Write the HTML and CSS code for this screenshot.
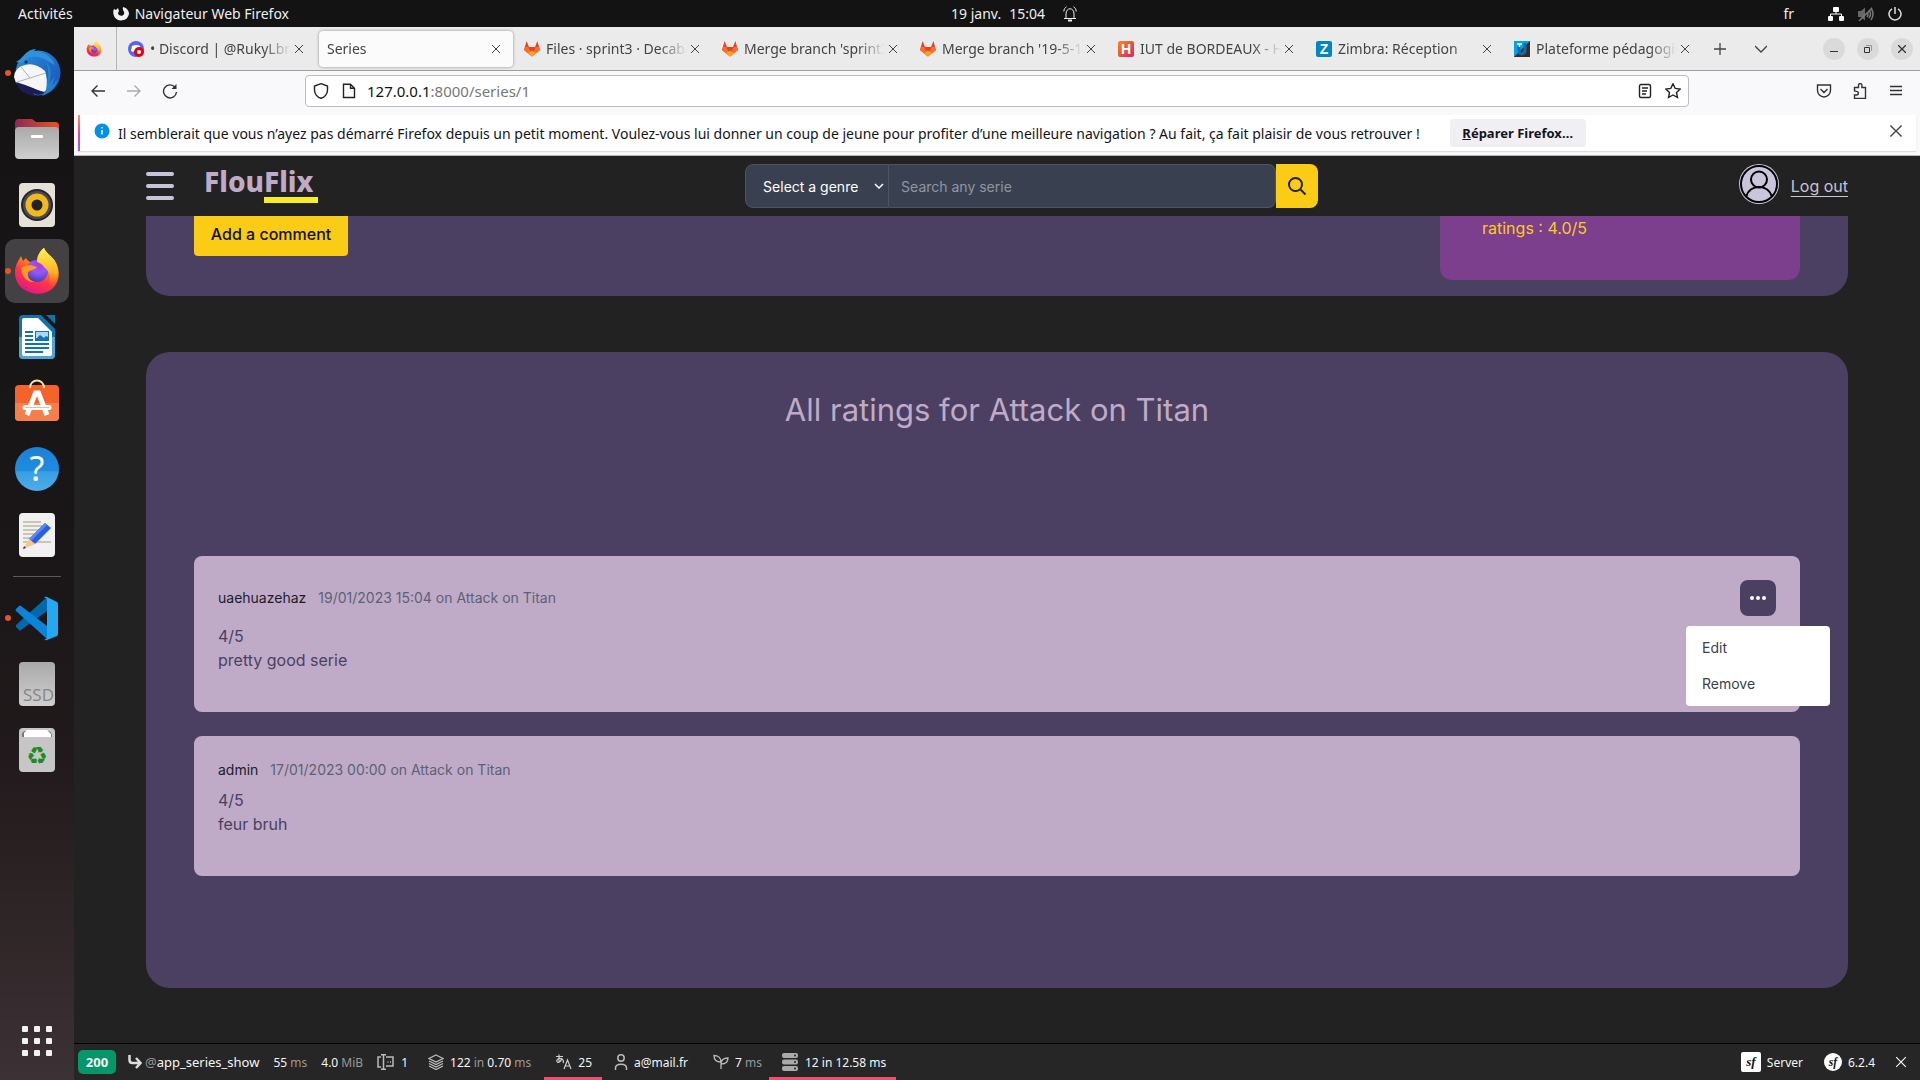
FILE: index.html
```html
<!DOCTYPE html>
<html lang="fr">
<head>
<meta charset="utf-8">
<meta name="viewport" content="width=device-width, initial-scale=1">
<title>Series</title>
<link rel="stylesheet" href="styles.css">
</head>
<body>
<svg class="defs" aria-hidden="true">
  <defs>
    <linearGradient id="fox" x1="0.8" y1="0" x2="0.3" y2="1"><stop offset="0" stop-color="#fff44f"/><stop offset=".35" stop-color="#ff980e"/><stop offset=".65" stop-color="#ff3647"/><stop offset="1" stop-color="#e31587"/></linearGradient>
    <linearGradient id="foxtail" x1="0.5" y1="0" x2="0.5" y2="1"><stop offset="0" stop-color="#fff44f"/><stop offset=".6" stop-color="#ffb02a"/><stop offset="1" stop-color="#ff5a34" stop-opacity="0"/></linearGradient>
    <radialGradient id="globe" cx=".6" cy=".2" r=".8"><stop offset="0" stop-color="#b833e1"/><stop offset=".5" stop-color="#9059ff"/><stop offset="1" stop-color="#4a3fae"/></radialGradient>
    <linearGradient id="bird" x1="0" y1="0" x2="1" y2="1"><stop offset="0" stop-color="#2f8fe0"/><stop offset=".5" stop-color="#1f6fc9"/><stop offset="1" stop-color="#1d4fb4"/></linearGradient>
    <linearGradient id="grey" x1="0" y1="0" x2="0" y2="1"><stop offset="0" stop-color="#a9a9a9"/><stop offset="1" stop-color="#cfcfcf"/></linearGradient>
    <linearGradient id="folder" x1="0" y1="0" x2="1" y2="0"><stop offset="0" stop-color="#8b2a52"/><stop offset="1" stop-color="#e95420"/></linearGradient>
    <linearGradient id="blue" x1="0" y1="0" x2="0" y2="1"><stop offset="0" stop-color="#1b7fd6"/><stop offset=".55" stop-color="#1f8de0"/><stop offset=".56" stop-color="#389fe3"/><stop offset="1" stop-color="#4caee8"/></linearGradient>
    <linearGradient id="hfav" x1="0" y1="0" x2="1" y2="1"><stop offset="0" stop-color="#f58a1f"/><stop offset="1" stop-color="#d6246e"/></linearGradient>
    <symbol id="firefox" viewBox="0 0 46 48">
      <path d="M1 25C1 19 4 14 7 9l2 5c1-1 2-2 3-3 1 2 3 4 5 4l7-1C23 8 27 3 30 1c2 6 9 8 12 15 5 10 3 20-4 26-8 7-22 6-30-1C3 37 1 31 1 25z" fill="url(#fox)"/>
      <circle cx="23" cy="24" r="11" fill="url(#globe)"/>
      <path d="M7 21c4-3 9-4 16-1-2 4-8 2-9 6-1 4 2 8 7 9-8 1-14-6-14-14z" fill="#ff9a1e"/>
      <path d="M30 1c2 6 9 8 12 15 4 9 1 20-8 25 3-6 3-16-4-21-2-4-7-4-7-6 0-6 4-11 7-13z" fill="url(#foxtail)"/>
    </symbol>
    <symbol id="gitlab" viewBox="0 0 16 16">
      <path d="M2.600 0 5 6h6l2.400-6L16 9 8 15.500 0 9z" fill="#e24329"/>
      <path d="M0 9 1 6h3.500L8 15.500zM16 9l-1-3h-3.500L8 15.500z" fill="#fc6d26"/>
      <path d="M4 12 8 9.500l4 2.500-4 3.500z" fill="#fca326"/>
    </symbol>
    <symbol id="close" viewBox="0 0 10 10"><path d="m1 1 8 8M9 1 1 9" fill="none" stroke="currentColor"/></symbol>
  </defs>
</svg>

<header class="topbar">
  <div class="topbar-left">
    <span>Activités</span>
    <span class="app-name">
      <svg width="16" height="16" viewBox="0 0 16 16"><path d="M1 3l2 1 2-2 1 3-1 2c0 3 5 4 6 1 1-3-2-3-1-7 4 1 6 4 6 7a8 8 0 0 1-15 2C0 7 0 5 1 3z" fill="#f2f2f2"/></svg>
      Navigateur Web Firefox
    </span>
  </div>
  <div class="clock">
    <span>19 janv.</span><span>15:04</span>
    <svg width="14" height="16" viewBox="0 0 14 16" fill="none" stroke="#eee"><path d="M1 12.500h12M3 12.500V8c0-7 8-7 8 0v4.500M.8 5.500C1 3 2 1.500 3.500.8M13.200 5.500c-.2-2.500-1.200-4-2.700-4.700"/><path d="M5 14.500h4" stroke-width="2"/></svg>
  </div>
  <div class="topbar-right">
    <span class="lang">fr</span>
    <svg width="16" height="14" viewBox="0 0 16 14" fill="#fff"><rect x="5" width="6" height="5" rx="1"/><rect y="9" width="5" height="5" rx="1"/><rect x="11" y="9" width="5" height="5" rx="1"/><path d="M2.500 9V7h11v2M8 4v3" fill="none" stroke="#fff"/></svg>
    <svg width="16" height="14" viewBox="0 0 16 14" fill="#666"><path d="M0 4h3l4-3.500v13L3 10H0z"/><path d="M9 5q2 2 0 5M11 3q3 4 0 8M13 1q4 6 0 12M1 14 14 1" fill="none" stroke="#777" stroke-width="1.500"/></svg>
    <svg width="14" height="14" viewBox="0 0 14 14" fill="none" stroke="#ddd" stroke-width="1.500"><path d="M4 1.800a6 6 0 1 0 6 0M7 0v7"/></svg>
  </div>
</header>

<div class="desktop">
  <nav class="dock" aria-label="Dock">
    <button class="running" aria-label="Thunderbird"><svg width="48" height="48" viewBox="0 0 48 48">
      <circle cx="25" cy="24" r="22.500" fill="url(#bird)"/>
      <path d="M3 13 9 9C12 4 17 0 23 0l-2 2c10 0 18 6 21 14l-11-6c-7-4-17-3-22 4z" fill="#2f92dc"/>
      <path d="M33 12c5 6 6 15 3 23l6-8-3 10 6-7c-2 8-8 14-16 17l5-7-6 4c8-9 9-21 5-32z" fill="#2383d0"/>
      <path d="M1 28Q2 18 12 16q10-3 20 6 3 8 1 19L31 43 3 34z" fill="#f6f6f8"/>
      <path d="m8 18 9 11 16-5M17 29 4 33" fill="none" stroke="#aeb2bc"/>
      <path d="M3 33q10 3 17 6 8 4 12 4-6 5-12 1l2 3C12 46 5 41 3 33z" fill="#1c1b54"/>
      <circle cx="13" cy="13" r="1.500" fill="#123"/></svg></button>
    <button aria-label="Fichiers"><svg width="48" height="48" viewBox="0 0 48 48"><path d="M2 8q0-4 4-4h13l4 3h19q4 0 4 4v12H2z" fill="url(#folder)"/><rect x="2" y="12" width="44" height="32" rx="4" fill="url(#grey)"/><rect x="18" y="20" width="12" height="3" rx="1" fill="#fff"/></svg></button>
    <button aria-label="Rhythmbox"><svg width="48" height="48" viewBox="0 0 48 48"><rect x="6" y="2" width="36" height="44" rx="4" fill="#e6e1d7"/><circle cx="24" cy="24" r="16" fill="#26262c"/><circle cx="24" cy="24" r="14" fill="#4a4a52"/><circle cx="24" cy="24" r="11.500" fill="#f0b91d"/><circle cx="24" cy="24" r="5.500" fill="#222"/></svg></button>
    <button class="running active" aria-label="Firefox"><svg width="46" height="48"><use href="#firefox"/></svg></button>
    <button aria-label="LibreOffice Writer"><svg width="48" height="48" viewBox="0 0 48 48"><path d="M10 2h18l14 14v26q0 4-4 4H10q-4 0-4-4V6q0-4 4-4z" fill="#1174a8"/><path d="M6 24h36v18q0 4-4 4H10q-4 0-4-4z" fill="#4aa7d6"/><path d="M11 5h14l14 14v22q0 2-2 2H11q-2 0-2-2V7q0-2 2-2z" fill="#fff"/><path d="M33 2h9v9z" fill="#1174a8"/><path d="M12 19h8M12 23h8M12 27h8M12 31h24M12 35h24M12 39h18" stroke="#1073b5" stroke-width="2"/><path d="M22 18h14v10H22z" fill="#1073b5"/><path d="M23 19h12v5l-2-1-2 2-4-3-3 3h-1z" fill="#a8d8f5"/></svg></button>
    <button aria-label="Logiciels"><svg width="48" height="48" viewBox="0 0 48 48"><rect x="2" y="6" width="44" height="36" rx="4" fill="#f4632a"/><path d="M2 24h44v14q0 4-4 4H6q-4 0-4-4z" fill="#f57f4a"/><path d="M17 9c0-10 14-10 14 0" fill="none" stroke="#fbe3a8" stroke-width="2"/><path d="m14 36 8.500-22h3L34 36" fill="none" stroke="#fff" stroke-width="5"/><path d="M12 28.500h24" stroke="#fff" stroke-width="5" stroke-linecap="round"/><path d="M12 28.500h24" stroke="#f3b59b"/></svg></button>
    <button aria-label="Aide"><svg width="48" height="48" viewBox="0 0 48 48"><circle cx="24" cy="24" r="22" fill="url(#blue)"/><text class="help-mark" x="24" y="36" text-anchor="middle">?</text></svg></button>
    <button aria-label="Éditeur de texte"><svg width="48" height="48" viewBox="0 0 48 48"><rect x="6" y="2" width="36" height="44" rx="4" fill="#f1f1f1"/><path d="M10 11h18M10 15h20M10 19h18M10 23h13M10 27h9M10 31h28" stroke="#c9c5b8" stroke-width="2"/><path d="m16 28 16-16 6 5-16 16z" fill="#2a5ee0"/><path d="m16 28 16-16 2 2-16 16z" fill="#5b86f5"/><path d="m16 28 6 5-12 5z" fill="#ffc48a"/><path d="m11 35 2 2-3 1z" fill="#333"/></svg></button>
    <hr>
    <button class="running" aria-label="Visual Studio Code"><svg width="48" height="48" viewBox="0 0 48 48"><path d="M3 31 34 3v14L8 36q-1 1-2 0l-3-3z" fill="#0069ad"/><path d="M3 17q-1-1 0-2l3-3q1-1 2 0l26 20v13z" fill="#0a84d8"/><path d="m34 3 10 5q1 1 1 2v30q0 1-1 2l-10 4q-1 1-3-1 3 1 3-2V6q0-3-3-2 1-2 3-1z" fill="#25a7f2"/></svg></button>
    <button aria-label="SSD"><svg width="48" height="48" viewBox="0 0 48 48"><rect x="6" y="2" width="36" height="44" rx="4" fill="url(#grey)"/><text class="disk-label" x="41" y="41" text-anchor="end">SSD</text></svg></button>
    <button aria-label="Corbeille"><svg width="48" height="48" viewBox="0 0 48 48"><rect x="6" y="2" width="36" height="44" rx="4" fill="#c6c6c6"/><path d="M9 11q-1-6 4-6h22q4 0 4 6z" fill="#777"/><path d="M11 11V7l3-3h20l4 4v3z" fill="#fff"/><text class="recycle" x="24" y="38" text-anchor="middle">♻</text></svg></button>
    <button class="all-apps" aria-label="Applications"><svg width="30" height="30" viewBox="0 0 30 30" fill="#f2f2f2"><rect width="6" height="6" rx="1"/><rect x="12" width="6" height="6" rx="1"/><rect x="24" width="6" height="6" rx="1"/><rect y="12" width="6" height="6" rx="1"/><rect x="12" y="12" width="6" height="6" rx="1"/><rect x="24" y="12" width="6" height="6" rx="1"/><rect y="24" width="6" height="6" rx="1"/><rect x="12" y="24" width="6" height="6" rx="1"/><rect x="24" y="24" width="6" height="6" rx="1"/></svg></button>
  </nav>

  <div class="browser">
    <div class="tabs">
      <button class="pinned" aria-label="Firefox"><svg width="16" height="16"><use href="#firefox"/></svg></button>
      <div class="tab"><svg class="favicon" viewBox="0 0 16 16"><circle cx="8" cy="8" r="8" fill="#5865f2"/><path d="M4 5q4-2 8 0l1 5-2 1-1-1H6l-1 1-2-1z" fill="#fff"/><circle cx="11" cy="11" r="5" fill="#e8000d"/><circle cx="11" cy="11" r="2" fill="#fff"/></svg><span class="tab-title">• Discord | @RukyLbrown</span><button aria-label="Fermer"><svg><use href="#close"/></svg></button></div>
      <div class="tab selected"><span class="tab-title">Series</span><button aria-label="Fermer"><svg><use href="#close"/></svg></button></div>
      <div class="tab"><svg class="favicon"><use href="#gitlab"/></svg><span class="tab-title">Files · sprint3 · Decabane</span><button aria-label="Fermer"><svg><use href="#close"/></svg></button></div>
      <div class="tab"><svg class="favicon"><use href="#gitlab"/></svg><span class="tab-title">Merge branch 'sprint3'</span><button aria-label="Fermer"><svg><use href="#close"/></svg></button></div>
      <div class="tab"><svg class="favicon"><use href="#gitlab"/></svg><span class="tab-title">Merge branch '19-5-1'</span><button aria-label="Fermer"><svg><use href="#close"/></svg></button></div>
      <div class="tab"><svg class="favicon" viewBox="0 0 16 16"><rect width="16" height="16" rx="2" fill="url(#hfav)"/><text class="fav-letter" x="8" y="13" text-anchor="middle">H</text></svg><span class="tab-title">IUT de BORDEAUX - HP</span><button aria-label="Fermer"><svg><use href="#close"/></svg></button></div>
      <div class="tab"><svg class="favicon" viewBox="0 0 16 16"><rect width="16" height="16" rx="2" fill="#0087c3"/><text class="fav-letter" x="8" y="13" text-anchor="middle">Z</text></svg><span class="tab-title">Zimbra: Réception</span><button aria-label="Fermer"><svg><use href="#close"/></svg></button></div>
      <div class="tab"><svg class="favicon" viewBox="0 0 16 16"><path d="M0 0h16v16H0z" fill="#3b2a26"/><path d="M0 0h16L0 16z" fill="#00a4e4"/><path d="M5 5v5c0 4 6 4 6-1V2" fill="none" stroke="#0a6fb0" stroke-width="3"/><path d="M3 3h5M5.500 3v3" stroke="#fff" stroke-width="1.500"/></svg><span class="tab-title">Plateforme pédagogique</span><button aria-label="Fermer"><svg><use href="#close"/></svg></button></div>
      <button class="tab-action" aria-label="Nouvel onglet"><svg width="12" height="12" viewBox="0 0 12 12"><path d="M6 0v12M0 6h12" stroke="currentColor" stroke-width="1.300"/></svg></button>
      <button class="tab-action" aria-label="Lister les onglets"><svg width="12" height="12" viewBox="0 0 12 12"><path d="m0 3 6 6 6-6" fill="none" stroke="currentColor" stroke-width="1.300"/></svg></button>
      <div class="window-controls">
        <button aria-label="Réduire"><svg width="8" height="8" viewBox="0 0 8 8"><path d="M0 6.500h8" stroke="#333"/></svg></button>
        <button aria-label="Restaurer"><svg width="8" height="8" viewBox="0 0 8 8"><path d="M.5 2.500h5v5h-5z" fill="none" stroke="#333"/><path d="M2 .5h5.500V6" fill="none" stroke="#999"/></svg></button>
        <button aria-label="Fermer la fenêtre"><svg width="8" height="8" viewBox="0 0 8 8"><path d="m0 0 8 8M8 0 0 8" stroke="#333" stroke-width="1.300"/></svg></button>
      </div>
    </div>

    <div class="navbar">
      <button aria-label="Précédent"><svg width="16" height="16" viewBox="0 0 16 16"><path d="M15 8H2M7.500 2.500 2 8l5.500 5.500"/></svg></button>
      <button class="disabled" aria-label="Suivant"><svg width="16" height="16" viewBox="0 0 16 16"><path d="M1 8h13M8.500 2.500 14 8l-5.500 5.500"/></svg></button>
      <button aria-label="Actualiser"><svg width="16" height="16" viewBox="0 0 16 16"><path d="M14.500 9A6.500 6.500 0 1 1 13 4.200"/><path d="M14.500 1v5h-5z" fill="currentColor" stroke="none"/></svg></button>
      <div class="urlbar">
        <svg width="16" height="16" viewBox="0 0 16 16"><path d="M8 .7 14.500 3v4c0 4-3 7.500-6.500 8.300C4.500 14.500 1.500 11 1.500 7V3z"/></svg>
        <svg class="doc-icon" width="14" height="16" viewBox="0 0 14 16"><path d="M1.500 1.200h7l4 4v9.300h-11zM8.500 1.200v4h4"/></svg>
        <span class="url">127.0.0.1<span>:8000/series/1</span></span>
        <svg width="16" height="16" viewBox="0 0 16 16"><rect x="2.500" y="1.500" width="11" height="13" rx="1.500"/><path d="M5 5h6M5 8h5M5 11h4"/></svg>
        <svg width="16" height="16" viewBox="0 0 16 16"><path d="m8 .8 2.200 4.600 5 .6-3.700 3.500 1 5L8 12l-4.500 2.500 1-5L.8 6l5-.6z"/></svg>
      </div>
      <button aria-label="Pocket"><svg width="16" height="16" viewBox="0 0 16 16"><path d="M1.500 2h13v5.500a6.500 6.500 0 0 1-13 0zM4.500 6 8 9.500 11.500 6"/></svg></button>
      <button aria-label="Extensions"><svg width="16" height="16" viewBox="0 0 16 16"><path d="M2.500 8V4.500h4V2.300a1.700 1.700 0 0 1 3.400 0v2.200h3.600v11h-11v-3.500h2a1.800 1.800 0 0 0 0-3.600z"/></svg></button>
      <button aria-label="Menu"><svg width="16" height="16" viewBox="0 0 16 16"><path d="M2 3.500h12M2 7.500h12M2 11.500h12"/></svg></button>
    </div>

    <div class="notice-wrap">
      <div class="notice">
        <svg class="info" width="16" height="16" viewBox="0 0 16 16"><circle cx="8" cy="8" r="7.500" fill="#0090ed"/><path d="M8 7v4.500M8 4v1.500" stroke="#fff" stroke-width="1.500"/></svg>
        <p>Il semblerait que vous n’ayez pas démarré Firefox depuis un petit moment. Voulez-vous lui donner un coup de jeune pour profiter d’une meilleure navigation ? Au fait, ça fait plaisir de vous retrouver !</p>
        <button class="repair"><u>R</u>éparer Firefox…</button>
        <button class="dismiss" aria-label="Fermer"><svg width="14" height="14"><use href="#close"/></svg></button>
      </div>
    </div>

    <div class="site">
      <header class="site-header">
        <button class="burger" aria-label="Menu"><i></i><i></i><i></i></button>
        <a class="logo" href="#">Flou<span>Flix</span></a>
        <form class="search">
          <label class="genre">
            <select aria-label="Genre"><option>Select a genre</option></select>
            <svg width="10" height="6" viewBox="0 0 10 6"><path d="m1 1 4 4 4-4" fill="none" stroke="#fff" stroke-width="1.500"/></svg>
          </label>
          <input type="text" placeholder="Search any serie" aria-label="Search any serie">
          <button type="button" aria-label="Search"><svg width="20" height="20" viewBox="0 0 20 20"><circle cx="8.500" cy="8.500" r="6.500"/><path d="m13.500 13.500 5 5"/></svg></button>
        </form>
        <svg class="avatar" width="40" height="40" viewBox="0 0 40 40"><circle cx="20" cy="20" r="20" fill="#cbc5dc"/><g fill="none" stroke="#000" stroke-width="2"><circle cx="20" cy="20" r="18"/><circle cx="20" cy="15.500" r="8"/><path d="M7.500 32c3-12 22-12 25 0"/></g></svg>
        <a class="logout" href="#">Log out</a>
      </header>

      <main>
        <section class="panel summary">
          <button class="add-comment">Add a comment</button>
          <div class="average">ratings : 4.0/5</div>
        </section>

        <section class="panel ratings">
          <h1>All ratings for Attack on Titan</h1>
          <article class="rating">
            <div class="meta">
              <strong>uaehuazehaz</strong><span>19/01/2023 15:04 on Attack on Titan</span>
              <div class="more">
                <button aria-label="Options"><svg width="16" height="4" viewBox="0 0 16 4" fill="#fff"><circle cx="2" cy="2" r="2"/><circle cx="8" cy="2" r="2"/><circle cx="14" cy="2" r="2"/></svg></button>
                <div class="menu"><a href="#">Edit</a><a href="#">Remove</a></div>
              </div>
            </div>
            <p>4/5</p>
            <p>pretty good serie</p>
          </article>
          <article class="rating">
            <div class="meta"><strong>admin</strong><span>17/01/2023 00:00 on Attack on Titan</span></div>
            <p>4/5</p>
            <p>feur bruh</p>
          </article>
        </section>
      </main>

      <footer class="debug">
        <span class="status">200</span>
        <div class="block route"><svg width="14" height="14" viewBox="0 0 14 14" fill="none" stroke="#ddd" stroke-width="2.500"><path d="M1.500 0v5q0 3 3 3H12M8 3l4.500 5L8 13"/></svg><span><i>@</i>app_series_show</span></div>
        <div class="block"><span>55 <i>ms</i></span></div>
        <div class="block"><span>4.0 <i>MiB</i></span></div>
        <div class="block wide"><svg width="18" height="16" viewBox="0 0 18 16" fill="none" stroke="#bbb" stroke-width="1.500"><path d="M4 3H1v10h3M9 3h7v9H9M4 .8h5M4 15.200h5M6.500 1v14"/><path d="M10.500 8h1M13 8h1"/></svg><span>1</span></div>
        <div class="block wide"><svg width="16" height="16" viewBox="0 0 16 16" fill="none" stroke="#bbb" stroke-width="1.300"><path d="m8 1 7 3.500L8 8 1 4.500zM1 7l7 3.500L15 7M1 9.500 8 13l7-3.500M1 12l7 3.500L15 12"/></svg><span>122 <i>in</i> 0.70 <i>ms</i></span></div>
        <div class="block alert"><svg width="16" height="16" viewBox="0 0 16 16" fill="none" stroke="#ccc" stroke-width="1.200"><path d="M0 2.500h7M3 .5v7M6 4c-2 6-6 5-5 2 2-3 8-1 6 3M8 15l3.500-9L15 15M9 12h5"/></svg><span>25</span></div>
        <div class="block user"><svg width="14" height="16" viewBox="0 0 14 16" fill="none" stroke="#bbb" stroke-width="1.500"><circle cx="7" cy="4" r="3.200"/><path d="M1.500 16v-2c0-5 11-5 11 0v2"/></svg><span>a@mail.fr</span></div>
        <div class="block"><svg width="16" height="16" viewBox="0 0 16 16" fill="none" stroke="#bbb" stroke-width="1.300"><path d="M8 15V8C8 4 5 1.500 1 1.500 1 6 3 8 8 8M8 10c0-4 3-6 7-6 0 4-3 6-7 6z"/></svg><span>7 <i>ms</i></span></div>
        <div class="block alert"><svg width="18" height="18" viewBox="0 0 18 18" fill="#aaa"><rect x="1" width="16" height="5" rx="2"/><rect x="1" y="6.500" width="16" height="5" rx="2"/><rect x="1" y="13" width="16" height="5" rx="2"/><g fill="#262626"><circle cx="14" cy="2.500" r="1"/><circle cx="14" cy="9" r="1"/><circle cx="14" cy="15.500" r="1"/></g></svg><span>12 in 12.58 ms</span></div>
        <div class="block server"><svg width="20" height="20" viewBox="0 0 20 20"><rect width="20" height="20" rx="2" fill="#fff"/><text class="sf" x="10" y="14" text-anchor="middle">sf</text></svg><span>Server</span></div>
        <div class="block version"><svg width="18" height="18" viewBox="0 0 20 20"><circle cx="10" cy="10" r="10" fill="#fff"/><text class="sf" x="10" y="14" text-anchor="middle">sf</text></svg><span>6.2.4</span></div>
        <button class="debug-close" aria-label="Close"><svg width="12" height="12"><use href="#close"/></svg></button>
      </footer>
    </div>
  </div>
</div>
</body>
</html>
```
FILE: styles.css
```css
* { box-sizing: border-box; }
body {
  margin: 0;
  min-height: 100vh;
  display: flex;
  flex-direction: column;
  font-family: "Noto Sans", "Open Sans", sans-serif;
  font-size: 14px;
  background: #222;
}
button { border: 0; padding: 0; margin: 0; background: none; font: inherit; color: inherit; }
svg { flex: none; display: block; }
.defs { position: absolute; width: 0; height: 0; }

/* System bar */
.topbar {
  display: grid;
  grid-template-columns: 1fr auto 1fr;
  align-items: center;
  height: 27px;
  padding: 0 18px;
  background: #131313;
  color: #eee;
}
.topbar-left, .topbar-right, .app-name, .clock { display: flex; align-items: center; }
.topbar-left { gap: 40px; }
.app-name { gap: 6px; }
.clock { gap: 8px; padding-left: 108px; }
.clock svg { margin-left: 10px; }
.topbar-right { justify-content: flex-end; gap: 14px; }
.lang { margin-right: 20px; }

.desktop { flex: 1; display: flex; }

/* Dock */
.dock {
  flex: none;
  width: 74px;
  display: flex;
  flex-direction: column;
  align-items: center;
  gap: 2px;
  padding: 14px 0 7px;
  background: linear-gradient(#141314 0%, #1b1718 55%, #221a1c 70%, #3c3134 100%);
}
.dock button {
  position: relative;
  width: 64px;
  height: 64px;
  display: grid;
  place-items: center;
  border-radius: 10px;
}
.dock .active { background: #434143; }
.dock .running::before {
  content: "";
  position: absolute;
  left: 0;
  top: 29px;
  width: 6px;
  height: 6px;
  border-radius: 50%;
  background: #e95420;
}
.dock hr { width: 48px; height: 1px; margin: 7px 0; border: 0; background: #5b585a; }
.dock .all-apps { margin-top: auto; }
.help-mark { font: 34px "Noto Sans", sans-serif; fill: #fff; }
.disk-label { font: 17px "Open Sans", sans-serif; fill: #858585; }
.recycle { font: 24px "DejaVu Sans", sans-serif; fill: #1f8a1f; }

/* Browser chrome */
.browser { flex: 1; min-width: 0; display: flex; flex-direction: column; }
.tabs {
  display: flex;
  align-items: center;
  height: 44px;
  background: #ebebeb;
  border-bottom: 1px solid #9d9d9d;
  color: #444;
}
.pinned { flex: none; width: 43px; height: 43px; padding-right: 3px; display: grid; place-items: center; border-right: 1px solid #b5b5b5; margin-right: 2px; }
.tab {
  flex: 0 1 198px;
  min-width: 0;
  display: flex;
  align-items: center;
  height: 38px;
  padding: 0 10px 0 9px;
}
.favicon { width: 16px; height: 16px; margin-right: 6px; }
.fav-letter { font: 700 14px "Liberation Sans", sans-serif; fill: #fff; }
.tab-title {
  flex: 1;
  overflow: hidden;
  white-space: nowrap;
  mask-image: linear-gradient(to left, transparent, #000 28px);
}
.tab button { width: 16px; display: grid; place-items: center; }
.tab button svg { width: 10px; height: 10px; }
.tab.selected {
  flex-basis: 194px;
  height: 36px;
  margin: 0 2px;
  padding: 0 9px 0 8px;
  border-radius: 4px;
  background: #fbfbfb;
  box-shadow: 0 0 3px #888;
}
.tab-action { width: 41px; display: grid; place-items: center; flex: none; margin-left: -4px; }
.tab-action + .tab-action { margin-left: 0; }
.window-controls { margin-left: auto; display: flex; gap: 12px; padding-right: 7px; }
.window-controls button { width: 22px; height: 22px; border-radius: 50%; background: #dadada; display: grid; place-items: center; }

.navbar {
  display: flex;
  align-items: center;
  gap: 4px;
  height: 44px;
  padding: 0 8px 4px;
  background: #f9f9fb;
  color: #333;
}
.navbar svg { fill: none; stroke: currentColor; stroke-width: 1.4; }
.navbar button { width: 32px; height: 32px; display: grid; place-items: center; }
.navbar .disabled { color: #aaa; }
.urlbar {
  flex: 1;
  display: flex;
  align-items: center;
  height: 32px;
  margin: 0 115px;
  padding: 0 7px;
  border: 1px solid #bdbdbf;
  border-radius: 4px;
  background: #fff;
  color: #222;
}
.doc-icon { margin: 0 11px 0 13px; }
.url { flex: 1; color: #111; font-size: 15px; }
.url span { color: #777; }
.urlbar svg:last-child { margin-left: 12px; }

.notice-wrap { padding: 0 4px 4px; background: #f9f9fb; border-bottom: 1px solid #b8b8b8; }
.notice {
  display: flex;
  align-items: center;
  height: 36px;
  padding: 0 13px 0 14px;
  border-left: 2px solid;
  border-image: linear-gradient(#ff9a3c, #f0409c, #9059ff) 1;
  background: #fff;
  box-shadow: 0 1px 1px #ddd;
  color: #15141a;
}
.info { align-self: flex-start; margin: 8px 8px 0 0; }
.notice p { margin: 0; white-space: nowrap; overflow: hidden; }
.repair { flex: none; width: 136px; height: 28px; margin-left: 30px; border-radius: 4px; background: #f0f0f4; font-size: 13px; font-weight: 700; }
.dismiss { margin-left: auto; padding-bottom: 4px; color: #444; }

/* Site */
.site {
  flex: 1;
  display: flex;
  flex-direction: column;
  background: #222;
  font-family: Inter, "Noto Sans", sans-serif;
}
.site-header { display: flex; align-items: center; height: 60px; padding: 0 72px; }
.burger { width: 28px; display: grid; gap: 8px; }
.burger i { height: 4px; border-radius: 2px; background: #c8c3d9; }
.logo {
  margin: 0 6px 6px 30px;
  font: 800 28px/36px "Noto Sans", sans-serif;
  color: #bfabc8;
  text-decoration: none;
}
.logo span { display: inline-block; padding-right: 5px; border-bottom: 6px solid #fbed21; line-height: 32px; }
.search { display: flex; height: 44px; margin: 0 auto; font-size: 14px; }
.genre { display: grid; align-items: center; width: 144px; }
.genre > * { grid-area: 1 / 1; }
.genre svg { justify-self: end; margin-right: 5px; }
.genre select {
  appearance: none;
  height: 44px;
  padding: 0 17px;
  border: 1px solid #4b5563;
  border-radius: 8px 0 0 8px;
  background: #394150;
  color: #fff;
  font: inherit;
}
.search input {
  width: 387px;
  padding: 0 12px;
  border: 1px solid #4b5563;
  border-left: 0;
  border-radius: 0 8px 8px 0;
  background: #394150;
  font: inherit;
  color: #fff;
}
.search input::placeholder { color: #8f96a3; opacity: 1; }
.search button { width: 42px; display: grid; place-items: center; border-radius: 0 8px 8px 0; background: #facc15; }
.search button svg { fill: none; stroke: #222; stroke-width: 2; }
.avatar { margin-bottom: 4px; }
.logout { margin-left: 12px; font-size: 16px; color: #c8c3d9; text-underline-offset: 4px; }

main { flex: 1; padding: 0 72px 55px; }
.panel { padding: 0 48px; border-radius: 24px; background: #4b4062; }
.summary {
  display: flex;
  justify-content: space-between;
  align-items: flex-start;
  padding-bottom: 16px;
  margin-bottom: 56px;
  border-radius: 0 0 24px 24px;
}
.add-comment {
  width: 154px;
  height: 40px;
  padding-bottom: 4px;
  border-radius: 0 0 4px 4px;
  background: #facc15;
  color: #111;
  font-size: 16px;
  font-weight: 500;
}
.average {
  width: 360px;
  height: 64px;
  padding: 0 42px;
  border-radius: 0 0 12px 12px;
  background: #7b3f8e;
  color: #facc15;
  font-size: 16px;
  line-height: 24px;
}
.ratings { padding: 36px 48px 112px; }
h1 { margin: 0 0 124px; font-size: 31px; line-height: 44px; font-weight: 400; text-align: center; color: #bfabc8; }
.rating { padding: 24px 24px 40px; border-radius: 8px; background: #bfabc8; color: #4b4062; font-size: 16px; }
.rating + .rating { margin-top: 24px; }
.rating p { margin: 0; line-height: 24px; }
.meta { display: flex; align-items: center; gap: 12px; margin-bottom: 8px; font-size: 14px; line-height: 20px; color: #5b6275; }
.meta strong { font-weight: 400; color: #1c1c28; }
.more { position: relative; margin-left: auto; }
.more button { width: 36px; height: 36px; display: grid; place-items: center; border-radius: 8px; background: #4b4062; }
.menu {
  position: absolute;
  top: 46px;
  left: 50%;
  transform: translateX(-50%);
  width: 144px;
  padding: 4px 0;
  border-radius: 4px;
  background: #fff;
}
.menu a { display: block; padding: 8px 16px; color: #374151; text-decoration: none; }

/* Debug toolbar */
.debug {
  display: flex;
  align-items: center;
  height: 37px;
  padding-left: 4px;
  border-top: 1px solid #000;
  background: #262626;
  color: #f5f5f5;
  font-family: "Noto Sans", sans-serif;
  font-size: 12px;
  white-space: nowrap;
}
.debug i { font-style: normal; color: #999; }
.status { width: 38px; height: 24px; border-radius: 5px; background: #059669; font-size: 13px; font-weight: 700; line-height: 24px; text-align: center; }
.block { display: flex; align-items: center; gap: 6px; height: 36px; padding: 0 7px; }
.route { gap: 3px; padding-left: 12px; font-size: 13px; }
.wide { padding-right: 13px; }
.alert { padding: 0 10px 0 12px; border-bottom: 3px solid #f0506e; border-top: 3px solid transparent; }
.user { padding: 0 18px 0 12px; }
.server { margin-left: auto; padding-right: 14px; }
.sf { font: italic bold 13px "Liberation Serif", serif; fill: #111; }
.debug-close { width: 38px; display: grid; place-items: center; }
```
